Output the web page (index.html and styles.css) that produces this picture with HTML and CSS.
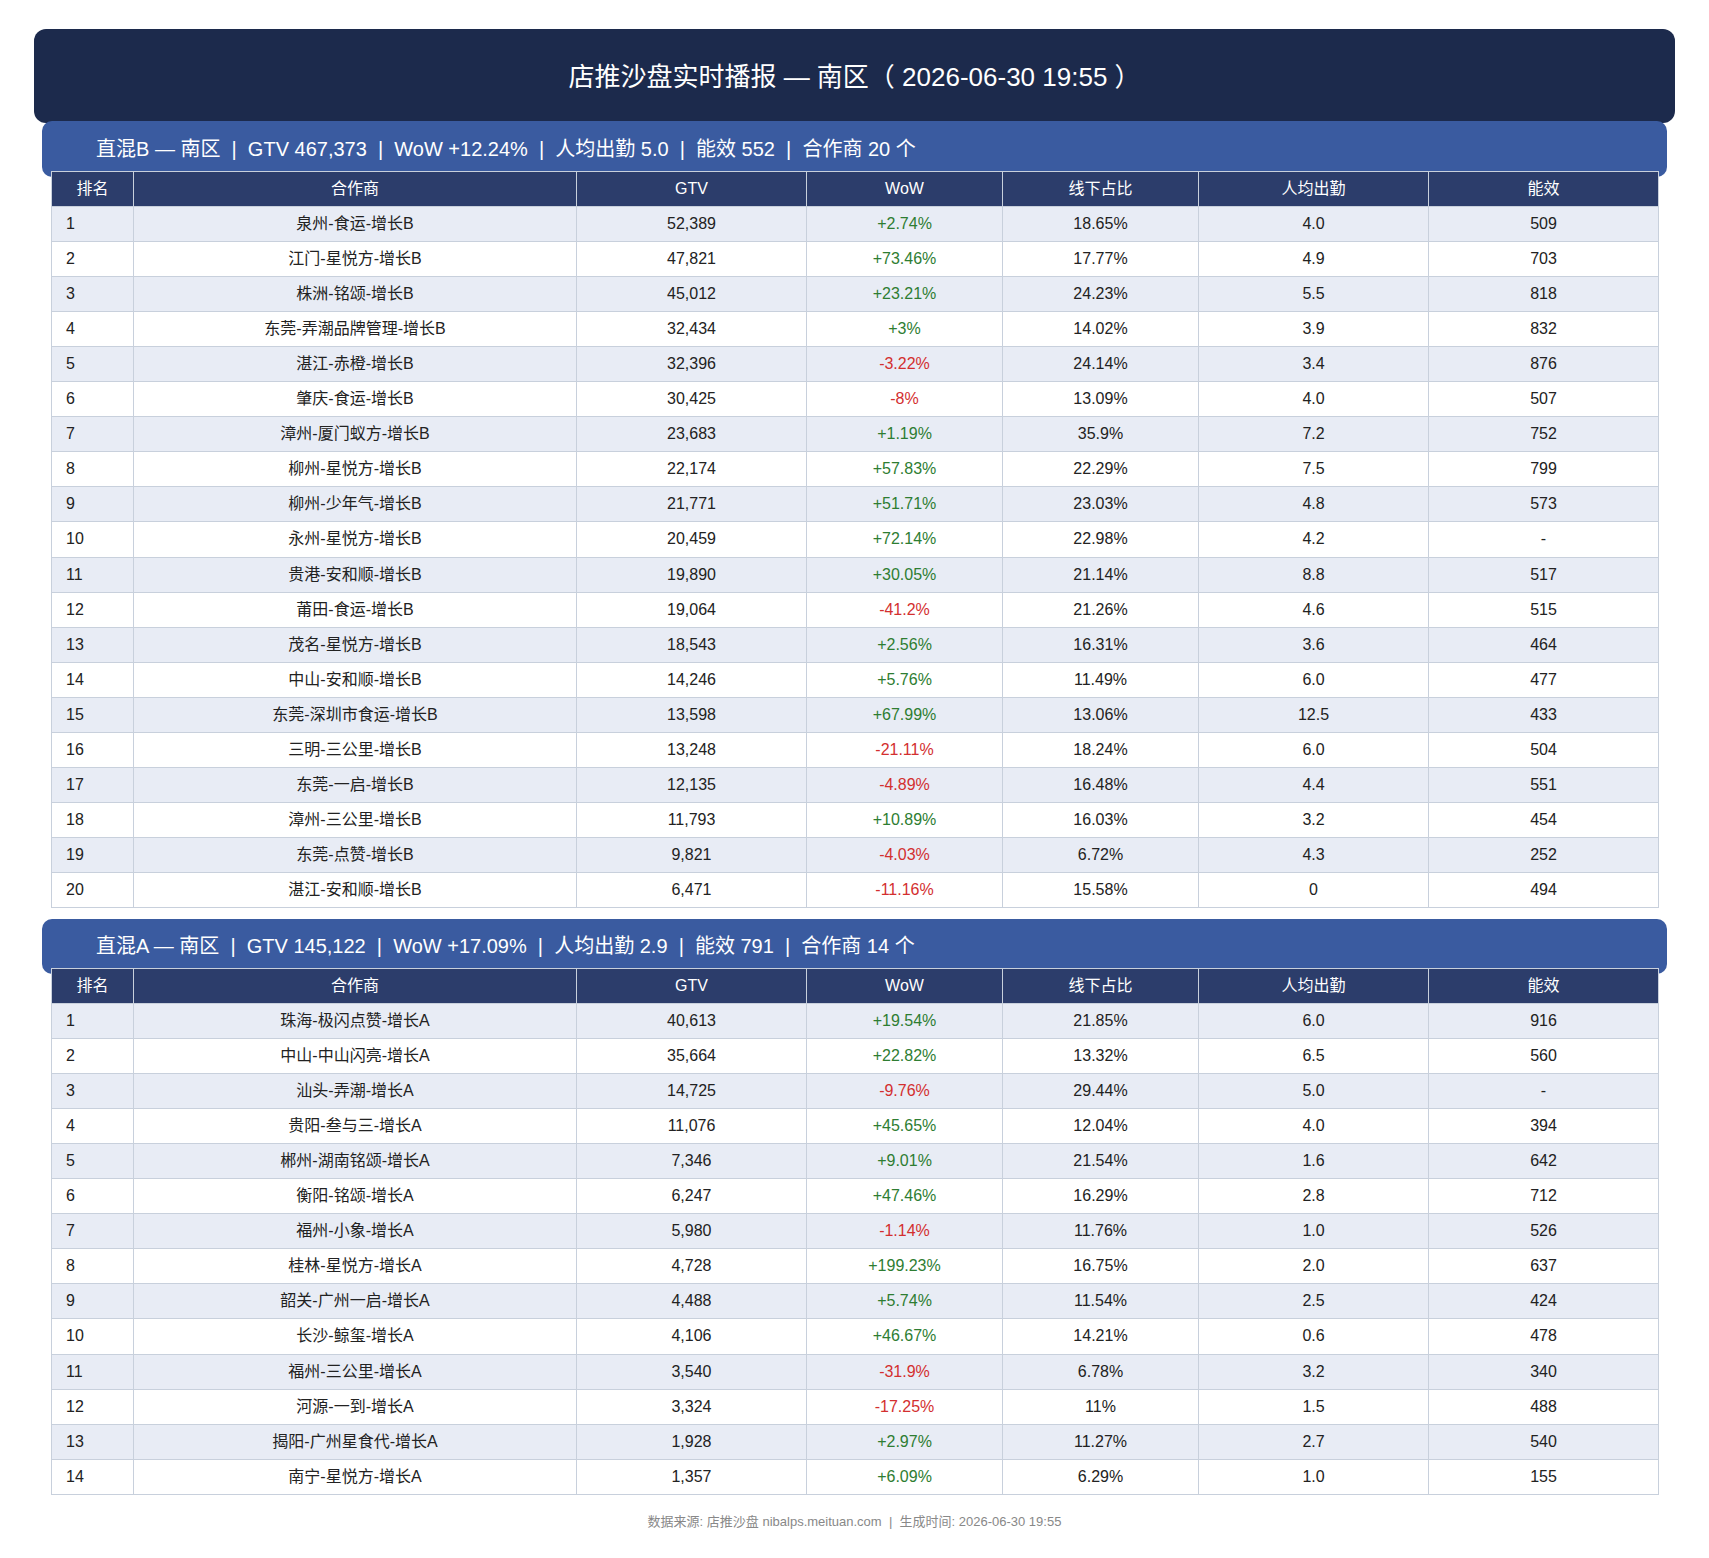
FILE: index.html
```html
<!DOCTYPE html>
<html lang="zh-CN">
<head>
<meta charset="utf-8">
<title>店推沙盘实时播报 — 南区</title>
<link rel="stylesheet" href="styles.css">
</head>
<body>
<div class="page">
  <header class="title-bar">店推沙盘实时播报 — 南区（ 2026-06-30 19:55 ）</header>

  <section class="section">
    <div class="section-bar">直混B — 南区&nbsp;&nbsp;|&nbsp;&nbsp;GTV 467,373&nbsp;&nbsp;|&nbsp;&nbsp;WoW +12.24%&nbsp;&nbsp;|&nbsp;&nbsp;人均出勤 5.0&nbsp;&nbsp;|&nbsp;&nbsp;能效 552&nbsp;&nbsp;|&nbsp;&nbsp;合作商 20 个</div>
    <table class="data">
      <colgroup>
        <col class="c-rank"><col class="c-name"><col class="c-gtv"><col class="c-wow"><col class="c-off"><col class="c-att"><col class="c-eff">
      </colgroup>
      <thead>
        <tr><th>排名</th><th>合作商</th><th>GTV</th><th>WoW</th><th>线下占比</th><th>人均出勤</th><th>能效</th></tr>
      </thead>
      <tbody>
        <tr><td>1</td><td>泉州-食运-增长B</td><td>52,389</td><td class="up">+2.74%</td><td>18.65%</td><td>4.0</td><td>509</td></tr>
        <tr><td>2</td><td>江门-星悦方-增长B</td><td>47,821</td><td class="up">+73.46%</td><td>17.77%</td><td>4.9</td><td>703</td></tr>
        <tr><td>3</td><td>株洲-铭颂-增长B</td><td>45,012</td><td class="up">+23.21%</td><td>24.23%</td><td>5.5</td><td>818</td></tr>
        <tr><td>4</td><td>东莞-弄潮品牌管理-增长B</td><td>32,434</td><td class="up">+3%</td><td>14.02%</td><td>3.9</td><td>832</td></tr>
        <tr><td>5</td><td>湛江-赤橙-增长B</td><td>32,396</td><td class="down">-3.22%</td><td>24.14%</td><td>3.4</td><td>876</td></tr>
        <tr><td>6</td><td>肇庆-食运-增长B</td><td>30,425</td><td class="down">-8%</td><td>13.09%</td><td>4.0</td><td>507</td></tr>
        <tr><td>7</td><td>漳州-厦门蚁方-增长B</td><td>23,683</td><td class="up">+1.19%</td><td>35.9%</td><td>7.2</td><td>752</td></tr>
        <tr><td>8</td><td>柳州-星悦方-增长B</td><td>22,174</td><td class="up">+57.83%</td><td>22.29%</td><td>7.5</td><td>799</td></tr>
        <tr><td>9</td><td>柳州-少年气-增长B</td><td>21,771</td><td class="up">+51.71%</td><td>23.03%</td><td>4.8</td><td>573</td></tr>
        <tr><td>10</td><td>永州-星悦方-增长B</td><td>20,459</td><td class="up">+72.14%</td><td>22.98%</td><td>4.2</td><td>-</td></tr>
        <tr><td>11</td><td>贵港-安和顺-增长B</td><td>19,890</td><td class="up">+30.05%</td><td>21.14%</td><td>8.8</td><td>517</td></tr>
        <tr><td>12</td><td>莆田-食运-增长B</td><td>19,064</td><td class="down">-41.2%</td><td>21.26%</td><td>4.6</td><td>515</td></tr>
        <tr><td>13</td><td>茂名-星悦方-增长B</td><td>18,543</td><td class="up">+2.56%</td><td>16.31%</td><td>3.6</td><td>464</td></tr>
        <tr><td>14</td><td>中山-安和顺-增长B</td><td>14,246</td><td class="up">+5.76%</td><td>11.49%</td><td>6.0</td><td>477</td></tr>
        <tr><td>15</td><td>东莞-深圳市食运-增长B</td><td>13,598</td><td class="up">+67.99%</td><td>13.06%</td><td>12.5</td><td>433</td></tr>
        <tr><td>16</td><td>三明-三公里-增长B</td><td>13,248</td><td class="down">-21.11%</td><td>18.24%</td><td>6.0</td><td>504</td></tr>
        <tr><td>17</td><td>东莞-一启-增长B</td><td>12,135</td><td class="down">-4.89%</td><td>16.48%</td><td>4.4</td><td>551</td></tr>
        <tr><td>18</td><td>漳州-三公里-增长B</td><td>11,793</td><td class="up">+10.89%</td><td>16.03%</td><td>3.2</td><td>454</td></tr>
        <tr><td>19</td><td>东莞-点赞-增长B</td><td>9,821</td><td class="down">-4.03%</td><td>6.72%</td><td>4.3</td><td>252</td></tr>
        <tr><td>20</td><td>湛江-安和顺-增长B</td><td>6,471</td><td class="down">-11.16%</td><td>15.58%</td><td>0</td><td>494</td></tr>
      </tbody>
    </table>
  </section>

  <section class="section section-next">
    <div class="section-bar">直混A — 南区&nbsp;&nbsp;|&nbsp;&nbsp;GTV 145,122&nbsp;&nbsp;|&nbsp;&nbsp;WoW +17.09%&nbsp;&nbsp;|&nbsp;&nbsp;人均出勤 2.9&nbsp;&nbsp;|&nbsp;&nbsp;能效 791&nbsp;&nbsp;|&nbsp;&nbsp;合作商 14 个</div>
    <table class="data">
      <colgroup>
        <col class="c-rank"><col class="c-name"><col class="c-gtv"><col class="c-wow"><col class="c-off"><col class="c-att"><col class="c-eff">
      </colgroup>
      <thead>
        <tr><th>排名</th><th>合作商</th><th>GTV</th><th>WoW</th><th>线下占比</th><th>人均出勤</th><th>能效</th></tr>
      </thead>
      <tbody>
        <tr><td>1</td><td>珠海-极闪点赞-增长A</td><td>40,613</td><td class="up">+19.54%</td><td>21.85%</td><td>6.0</td><td>916</td></tr>
        <tr><td>2</td><td>中山-中山闪亮-增长A</td><td>35,664</td><td class="up">+22.82%</td><td>13.32%</td><td>6.5</td><td>560</td></tr>
        <tr><td>3</td><td>汕头-弄潮-增长A</td><td>14,725</td><td class="down">-9.76%</td><td>29.44%</td><td>5.0</td><td>-</td></tr>
        <tr><td>4</td><td>贵阳-叁与三-增长A</td><td>11,076</td><td class="up">+45.65%</td><td>12.04%</td><td>4.0</td><td>394</td></tr>
        <tr><td>5</td><td>郴州-湖南铭颂-增长A</td><td>7,346</td><td class="up">+9.01%</td><td>21.54%</td><td>1.6</td><td>642</td></tr>
        <tr><td>6</td><td>衡阳-铭颂-增长A</td><td>6,247</td><td class="up">+47.46%</td><td>16.29%</td><td>2.8</td><td>712</td></tr>
        <tr><td>7</td><td>福州-小象-增长A</td><td>5,980</td><td class="down">-1.14%</td><td>11.76%</td><td>1.0</td><td>526</td></tr>
        <tr><td>8</td><td>桂林-星悦方-增长A</td><td>4,728</td><td class="up">+199.23%</td><td>16.75%</td><td>2.0</td><td>637</td></tr>
        <tr><td>9</td><td>韶关-广州一启-增长A</td><td>4,488</td><td class="up">+5.74%</td><td>11.54%</td><td>2.5</td><td>424</td></tr>
        <tr><td>10</td><td>长沙-鲸玺-增长A</td><td>4,106</td><td class="up">+46.67%</td><td>14.21%</td><td>0.6</td><td>478</td></tr>
        <tr><td>11</td><td>福州-三公里-增长A</td><td>3,540</td><td class="down">-31.9%</td><td>6.78%</td><td>3.2</td><td>340</td></tr>
        <tr><td>12</td><td>河源-一到-增长A</td><td>3,324</td><td class="down">-17.25%</td><td>11%</td><td>1.5</td><td>488</td></tr>
        <tr><td>13</td><td>揭阳-广州星食代-增长A</td><td>1,928</td><td class="up">+2.97%</td><td>11.27%</td><td>2.7</td><td>540</td></tr>
        <tr><td>14</td><td>南宁-星悦方-增长A</td><td>1,357</td><td class="up">+6.09%</td><td>6.29%</td><td>1.0</td><td>155</td></tr>
      </tbody>
    </table>
  </section>

  <footer class="footer">数据来源: 店推沙盘 nibalps.meituan.com&nbsp;&nbsp;|&nbsp;&nbsp;生成时间: 2026-06-30 19:55</footer>
</div>
</body>
</html>
```

FILE: styles.css
```css
* { box-sizing: border-box; }

html, body {
  margin: 0;
  padding: 0;
  background: #ffffff;
}

body {
  font-family: "Liberation Sans", Arial, "Noto Sans CJK SC", sans-serif;
  color: #222222;
}

.page {
  width: 1641px;
  margin: 0 auto;
  padding: 29px 0 0;
}

.title-bar {
  height: 94px;
  padding-bottom: 4px;
  background: #1c2a4c;
  border-radius: 12px;
  color: #ffffff;
  font-size: 26px;
  display: flex;
  align-items: center;
  justify-content: center;
}

.section-bar {
  margin: -2px 8px 0;
  height: 56px;
  padding: 0 0 0 54px;
  background: #3a5ba0;
  border-radius: 10px;
  color: #ffffff;
  font-size: 20px;
  line-height: 56px;
  white-space: nowrap;
}

.section-next {
  margin-top: 11px;
}

.section-next .section-bar {
  margin-top: 0;
  height: 55px;
  line-height: 55px;
}

.data {
  margin: -6px 16px 0 17px;
  width: 1607px;
  border-collapse: collapse;
  table-layout: fixed;
  font-size: 16px;
}

.c-rank { width: 82px; }
.c-name { width: 443px; }
.c-gtv  { width: 230px; }
.c-wow  { width: 196px; }
.c-off  { width: 196px; }
.c-att  { width: 230px; }
.c-eff  { width: 230px; }

.data th,
.data td {
  border: 1px solid #c8d0dc;
  padding: 7px 14px;
  line-height: 20.05px;
  text-align: center;
  font-weight: normal;
  white-space: nowrap;
}

.data th {
  background: #2c3d6b;
  color: #ffffff;
}

.data td:first-child {
  text-align: left;
}

.data tbody tr:nth-child(odd) td {
  background: #e8ecf5;
}

.data tbody tr:nth-child(even) td {
  background: #ffffff;
}

.data td.up { color: #2e7d32; }
.data td.down { color: #d32f2f; }

.footer {
  margin-top: 19px;
  text-align: center;
  font-size: 13px;
  line-height: 16px;
  color: #888888;
}
```
